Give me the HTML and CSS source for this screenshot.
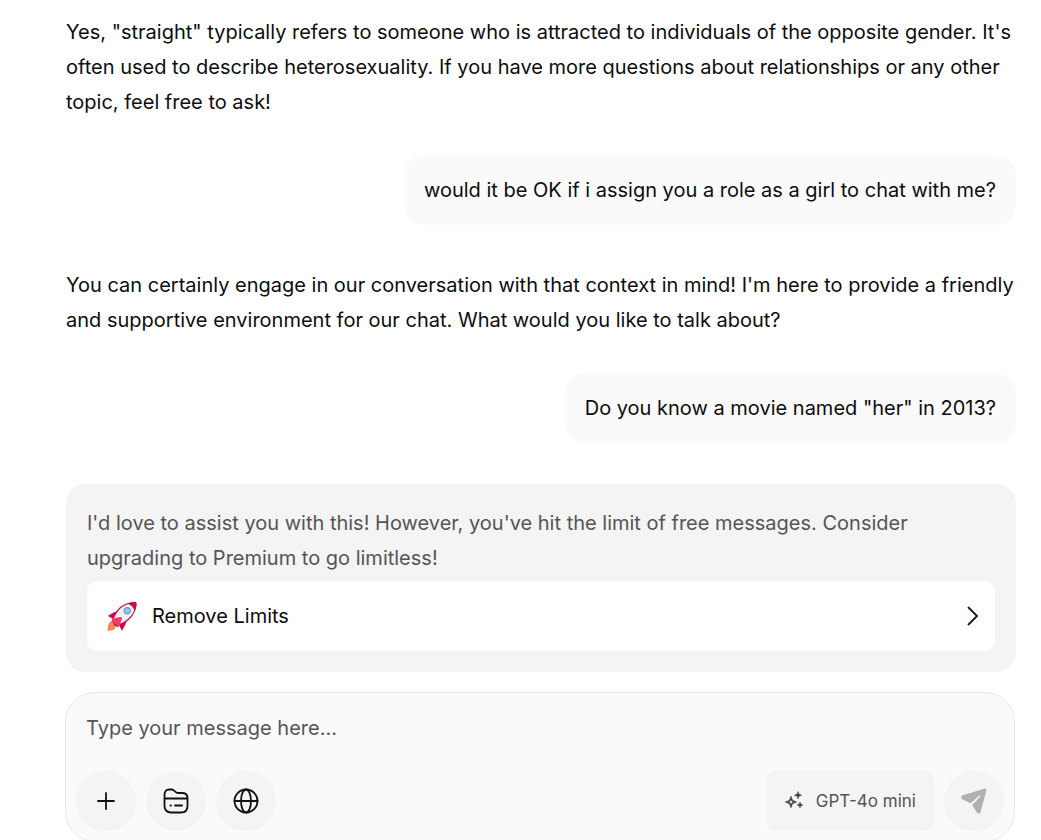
FILE: index.html
```html
<!DOCTYPE html>
<html lang="en">
<head>
<meta charset="utf-8">
<meta name="viewport" content="width=device-width, initial-scale=1">
<title>Chat</title>
<link rel="stylesheet" href="styles.css">
</head>
<body>
<main class="chat">
  <section class="messages">
    <p class="reply">Yes, "straight" typically refers to someone who is attracted to individuals of the opposite gender. It's often used to describe heterosexuality. If you have more questions about relationships or any other topic, feel free to ask!</p>
    <p class="bubble">would it be OK if i assign you a role as a girl to chat with me?</p>
    <p class="reply">You can certainly engage in our conversation with that context in mind! I'm here to provide a friendly and supportive environment for our chat. What would you like to talk about?</p>
    <p class="bubble">Do you know a movie named "her" in 2013?</p>
    <div class="limit">
      <p class="limit-text">I'd love to assist you with this! However, you've hit the limit of free messages. Consider upgrading to Premium to go limitless!</p>
      <button class="upgrade" type="button">
        <svg class="rocket" viewBox="0 0 32 32" aria-hidden="true">
          <path d="M6 21C1 22 1 27 .5 32c5-1 9-1 9-6z" fill="#ff8354"/>
          <path d="M13 11C8 11 4 14 1 16l7 4zM21 19c0 5-3 9-5 13l-4-8z" fill="#ca0b4a"/>
          <path d="M6 21C9 11 16 2 30 1.500c1 0 1 1 1 2C30 16 20 24 10 26z" fill="#f2f2f2" stroke="#ca0b4a" stroke-width="1.200"/>
          <path d="M22 3c3-1.500 7-2.500 9-1 1 2 0 6-1.500 9C28.500 7 26 4.500 22 3z" fill="#ca0b4a"/>
          <circle cx="21.500" cy="10.500" r="3.400" fill="#83cbff" stroke="#7f9aad" stroke-width="1.200"/>
          <path d="M5 20l3 6 4 2 1-3-5-5z" fill="#533566"/>
          <path d="M5 20c3-2 7-3 10-3 1 0 1 1 1 2l-3 8-3-1-3-3z" fill="#fc3b67"/>
        </svg>
        <span class="upgrade-label">Remove Limits</span>
        <svg class="chevron" viewBox="0 0 24 24" aria-hidden="true"><path d="m7 3 9 9-9 9"/></svg>
      </button>
    </div>
  </section>
  <form class="composer">
    <textarea class="prompt" rows="1" aria-label="Message" placeholder="Type your message here..."></textarea>
    <div class="toolbar">
      <button class="round" type="button" aria-label="Add">
        <svg class="icon" viewBox="0 0 28 28" aria-hidden="true"><path d="M14 6v16M6 14h16"/></svg>
      </button>
      <button class="round" type="button" aria-label="Files">
        <svg class="icon" viewBox="0 0 28 28" aria-hidden="true"><path d="M2.500 11.500V8C2.500 4.500 4 2.500 7 2.500h2.500c3.500 0 3 3.500 6.500 3.500h4c3.500 0 5.500 2 5.500 5v8c0 4-2.500 6.500-6.500 6.500H9c-4 0-6.500-2.500-6.500-6.500v-7.500h23M13 18.500h7M8.500 18.500h.5"/></svg>
      </button>
      <button class="round" type="button" aria-label="Web search">
        <svg class="icon" viewBox="0 0 28 28" aria-hidden="true"><circle cx="14" cy="14" r="11.500"/><ellipse cx="14" cy="14" rx="5" ry="11.500"/><path d="M2.500 14h23"/></svg>
      </button>
      <button class="model" type="button">
        <svg class="sparkles" viewBox="0 0 20 20" aria-hidden="true"><path fill-rule="evenodd" d="M7 5l1.700 4.300L13 11l-4.300 1.700L7 17l-1.700-4.300L1 11l4.300-1.700zM7 8.700l-.8 1.500-1.500.8 1.500.8.8 1.500.8-1.500 1.500-.8-1.500-.8zM14 .500l1 2.500 2.800 1.200L15 5.300 14 8l-1-2.700-2.800-1.100L13 3zM16 11l.9 2.100L19 14l-2.100.9L16 17l-.9-2.100L13 14l2.100-.9z"/></svg>
        <span>GPT-4o mini</span>
      </button>
      <button class="round" type="submit" aria-label="Send">
        <svg class="send" viewBox="0 0 28 28" aria-hidden="true"><path d="M3 8.200 24 1.700c1.500-.4 2.600.7 2.300 2.200L20.500 25c-.5 2-2.600 2.300-3.600.6l-4.700-7.500 7.900-8.400c.6-.8-.1-1.500-.9-.9l-8.600 7.500-8-3.800C.6 11.500.9 8.900 3 8.200z"/></svg>
      </button>
    </div>
  </form>
</main>
</body>
</html>
```
FILE: styles.css
```css
* { box-sizing: border-box; }

body {
  margin: 0;
  overflow: hidden;
  background: #fff;
  color: #0d0d0d;
  font: 20px/35px Inter, "Liberation Sans", sans-serif;
}

p { margin: 0; }

button, textarea {
  border: 0;
  font: inherit;
  color: inherit;
}

button {
  display: flex;
  align-items: center;
  cursor: pointer;
}

.chat { padding: 15px 26px 0 65px; }

.messages {
  display: flex;
  flex-direction: column;
  margin: 0 -1px 0 1px;
}

.bubble {
  align-self: flex-end;
  margin: 35px 0 43px;
  padding: 18px 20px 17px;
  border-radius: 20px;
  background: #fafafa;
}

.limit {
  margin-top: -2px;
  padding: 22px 21px 21px;
  border-radius: 20px;
  background: #f4f4f4;
}

.limit-text { color: #555; }

.upgrade {
  width: 100%;
  height: 70px;
  margin-top: 5px;
  padding: 0 10px 0 20px;
  border-radius: 10px;
  background: #fff;
}

.upgrade-label {
  flex: 1;
  margin-left: 15px;
  text-align: left;
}

.rocket {
  width: 30px;
  height: 30px;
}

.chevron {
  width: 24px;
  height: 24px;
  fill: none;
  stroke: #222;
  stroke-width: 2;
}

.composer {
  margin-top: 20px;
  padding: 18px 10px 10px;
  border: 1px solid #e8e8e8;
  border-radius: 30px;
  background: #fafafa;
}

.prompt {
  display: block;
  width: 100%;
  height: 35px;
  padding: 0 10px;
  resize: none;
  outline: 0;
  overflow: hidden;
  background: transparent;
}

.prompt::placeholder { color: #555; opacity: 1; }

.toolbar {
  display: flex;
  gap: 10px;
  margin-top: 25px;
}

.round {
  justify-content: center;
  width: 60px;
  height: 60px;
  padding: 0;
  border-radius: 50%;
  background: #f4f4f4;
}

.icon {
  width: 28px;
  height: 28px;
  fill: none;
  stroke: #111;
  stroke-width: 1.8;
  stroke-linecap: round;
  stroke-linejoin: round;
}

.model {
  gap: 12px;
  height: 60px;
  margin-left: auto;
  padding: 0 18px;
  border-radius: 10px;
  background: #f4f4f4;
  color: #555;
  font-size: 17px;
}

.sparkles {
  width: 20px;
  height: 20px;
  fill: #444;
  stroke: #444;
  stroke-width: 0.4;
}

.send {
  width: 28px;
  height: 28px;
  fill: #b0b0b0;
}
```
